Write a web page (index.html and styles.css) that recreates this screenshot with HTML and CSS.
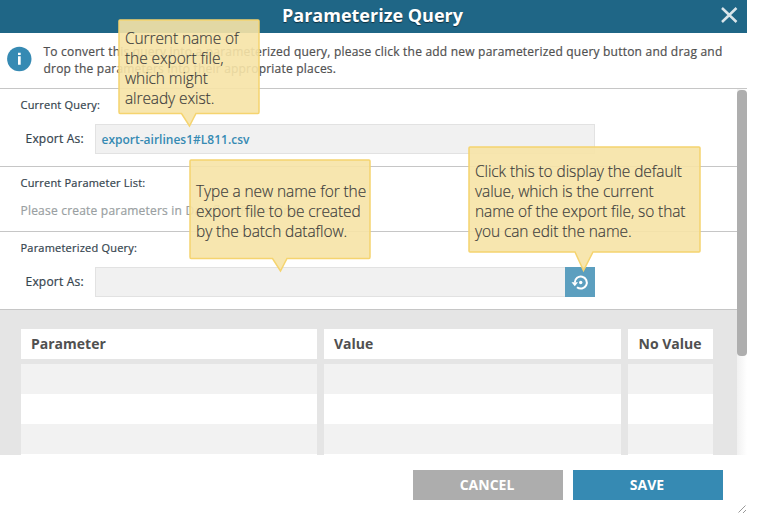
FILE: index.html
```html
<!DOCTYPE html>
<html lang="en">
<head>
<meta charset="utf-8">
<title>Parameterize Query</title>
<link rel="stylesheet" href="styles.css">
</head>
<body>
<main class="dialog">
  <header class="titlebar">
    <h1 class="title">Parameterize Query</h1>
    <svg class="close" width="18" height="18" viewBox="0 0 18 18"><path d="M2 2L16.500 16M16.500 2L2 16"/></svg>
  </header>
  <div class="notice">
    <svg class="info" width="26" height="26" viewBox="0 0 26 26"><circle cx="13.300" cy="13" r="12.200"/><path d="M12 10.300h2.700v8.500h-2.700zM12 6.800h2.700v2.200h-2.700z"/></svg>
    <p class="notice-text"><span class="line l1">To convert this query into a parameterized query, please click the add new parameterized query button and drag and</span><span class="line l2">drop the parameters into their appropriate places.</span></p>
  </div>
  <div class="body">
    <div class="content">
      <section class="section current">
        <h2 class="label">Current Query:</h2>
        <div class="field"><span class="field-name">Export As:</span><div class="input"><span class="value">export-airlines1#L811.csv</span></div></div>
      </section>
      <section class="section list">
        <h2 class="label">Current Parameter List:</h2>
        <p class="hint">Please create parameters in Dataflow Panel first.</p>
      </section>
      <section class="section parameterized">
        <h2 class="label">Parameterized Query:</h2>
        <div class="field"><span class="field-name">Export As:</span><div class="input short"></div><div class="reset"><svg width="30" height="30" viewBox="0 0 30 30"><path class="arc" d="M9.800 15.500A6 6 0 1 1 12 20.200"/><path class="head" d="M6.500 15.200h6.500l-3.200 4z"/><circle cx="15.700" cy="15.500" r="1.700"/></svg></div></div>
      </section>
      <section class="table">
        <div class="th">Parameter</div><div class="th">Value</div><div class="th last">No Value</div>
        <div class="rows"></div><div class="rows"></div><div class="rows"></div>
      </section>
    </div>
    <div class="scroll"><div class="thumb"></div></div>
  </div>
  <footer class="footer"><div class="btn cancel"><span>CANCEL</span></div><div class="btn save"><span>SAVE</span></div></footer>
  <svg class="grip" width="11" height="11" viewBox="0 0 11 11"><path d="M1.500 8.500L8.500 1.500M6 9L9 6"/></svg>

  <aside class="callout c1">
    <svg class="shape" width="142" height="109" viewBox="0 0 142 109"><path d="M2 1H140Q141 1 141 2V93Q141 94.500 140 94.500H78L71.500 107L63.500 94.500H2Q1 94.500 1 93V2Q1 1 2 1Z"/></svg>
    <p class="note"><span class="line">Current name of</span><span class="line">the export file,</span><span class="line">which might</span><span class="line">already exist.</span></p>
  </aside>
  <aside class="callout c2">
    <svg class="shape" width="182" height="114" viewBox="0 0 182 114"><path d="M2 1H180Q181 1 181 2V98Q181 99.500 180 99.500H98L91.500 112L83.500 99.500H2Q1 99.500 1 98V2Q1 1 2 1Z"/></svg>
    <p class="note"><span class="line">Type a new name for the</span><span class="line">export file to be created</span><span class="line">by the batch dataflow.</span></p>
  </aside>
  <aside class="callout c3">
    <svg class="shape" width="234" height="128" viewBox="0 0 234 128"><path d="M2 1H231Q232 1 232 2V105Q232 106 231 106H125L115.500 124.500L107 106H2Q1 106 1 105V2Q1 1 2 1Z"/></svg>
    <p class="note"><span class="line">Click this to display the default</span><span class="line">value, which is the current</span><span class="line">name of the export file, so that</span><span class="line">you can edit the name.</span></p>
  </aside>
</main>
</body>
</html>
```
FILE: styles.css
```css
* { box-sizing: border-box; }
body { margin: 0; background: #fff; font-family: "Open Sans", sans-serif; overflow: hidden; }
h1, h2, p { margin: 0; }
.dialog { position: relative; width: 747px; height: 515px; }
.titlebar { display: flex; height: 33px; padding-right: 9px; background: #1f6686; align-items: center; }
.title { flex: 1; padding: 0 0 3px 25px; text-align: center; font-size: 18px; line-height: 30px; font-weight: 700; color: #fff; text-shadow: 0 1px 1px #0008; }
.close { margin-bottom: 3px; fill: none; stroke: #d9e5ea; stroke-width: 2.500; }
.notice { display: flex; height: 56px; padding: 10px 0 0 6px; border-bottom: 1px solid #c6c6c6; }
.info { margin-top: 3px; fill: #368ab3; }
.info path { fill: #fff; }
.notice-text { margin-left: 11.500px; font-size: 12px; line-height: 17px; font-weight: 500; letter-spacing: .213px; color: #505050; -webkit-text-stroke: .2px; }
.line { display: block; width: max-content; white-space: nowrap; }
.body { display: flex; height: 366px; overflow: hidden; }
.content { width: 737px; }
.section { border-bottom: 1px solid #c6c6c6; padding-left: 20.500px; color: #35444e; }
.label { font-size: 11px; line-height: 16px; font-weight: 500; letter-spacing: .21px; -webkit-text-stroke: .2px; }
.current { height: 78px; padding-top: 8px; }
.list { height: 65px; padding-top: 8px; }
.parameterized { height: 78px; padding-top: 8px; }
.field { display: flex; margin-top: 11px; height: 30px; line-height: 30px; font-size: 12px; font-weight: 500; letter-spacing: .21px; }
.field-name { width: 74.500px; padding-left: 5px; -webkit-text-stroke: .2px; }
.input { width: 500px; padding-left: 5.500px; background: #f1f1f1; border: 1px solid #e2e2e2; color: #368ab3; font-weight: 600; letter-spacing: 0; line-height: 29px; }
.short { width: 470px; border-right: 0; }
.reset { width: 30px; height: 30px; background: #5c9fbf; }
.reset svg { display: block; fill: #fff; }
.reset .arc { fill: none; stroke: #fff; stroke-width: 2; }
.hint { margin-top: 11px; font-size: 12px; line-height: 18px; font-weight: 500; letter-spacing: .21px; color: #9a9fa2; -webkit-text-stroke: .2px; }
.table { display: grid; grid-template-columns: 296px 297px 85px; grid-template-rows: 30px 91px; gap: 5px 7px; height: 145px; padding: 19px 0 0 21px; background: #e5e5e5; }
.th { padding-left: 10px; background: #fff; font-size: 14px; line-height: 29px; font-weight: 700; color: #505050; white-space: nowrap; }
.last { padding-left: 10.500px; }
.rows { background: repeating-linear-gradient(#f2f2f2 0 30px, #fff 30px 60px); }
.scroll { width: 10px; padding-top: 1px; background: linear-gradient(90deg, #f1f1f1, #fff); }
.thumb { height: 266px; background: #aeaeae; border-radius: 4px; }
.footer { display: flex; gap: 10px; padding: 15px 0 0 413px; }
.btn { width: 150px; height: 30px; padding-right: 2px; text-align: center; line-height: 30px; font-size: 14px; font-weight: 700; color: #fff; }
.cancel { background: #adadad; }
.save { background: #368ab3; }
.grip { position: absolute; left: 737px; top: 504px; stroke: #999; fill: none; stroke-width: 1; }
.callout { position: absolute; }
.c1 { left: 118px; top: 19px; }
.c2 { left: 189px; top: 159px; }
.c3 { left: 468px; top: 146px; }
.shape { display: block; fill: #f6e4a7e8; stroke: #f5d46f; stroke-width: 1.500; }
.note { position: absolute; left: 7px; top: 9px; font-size: 15.500px; line-height: 20px; font-weight: 300; letter-spacing: -.1px; color: #3c3c3c; -webkit-text-stroke: .15px; }
.c2 .note { top: 22px; }
.c3 .note { top: 15px; }
```
